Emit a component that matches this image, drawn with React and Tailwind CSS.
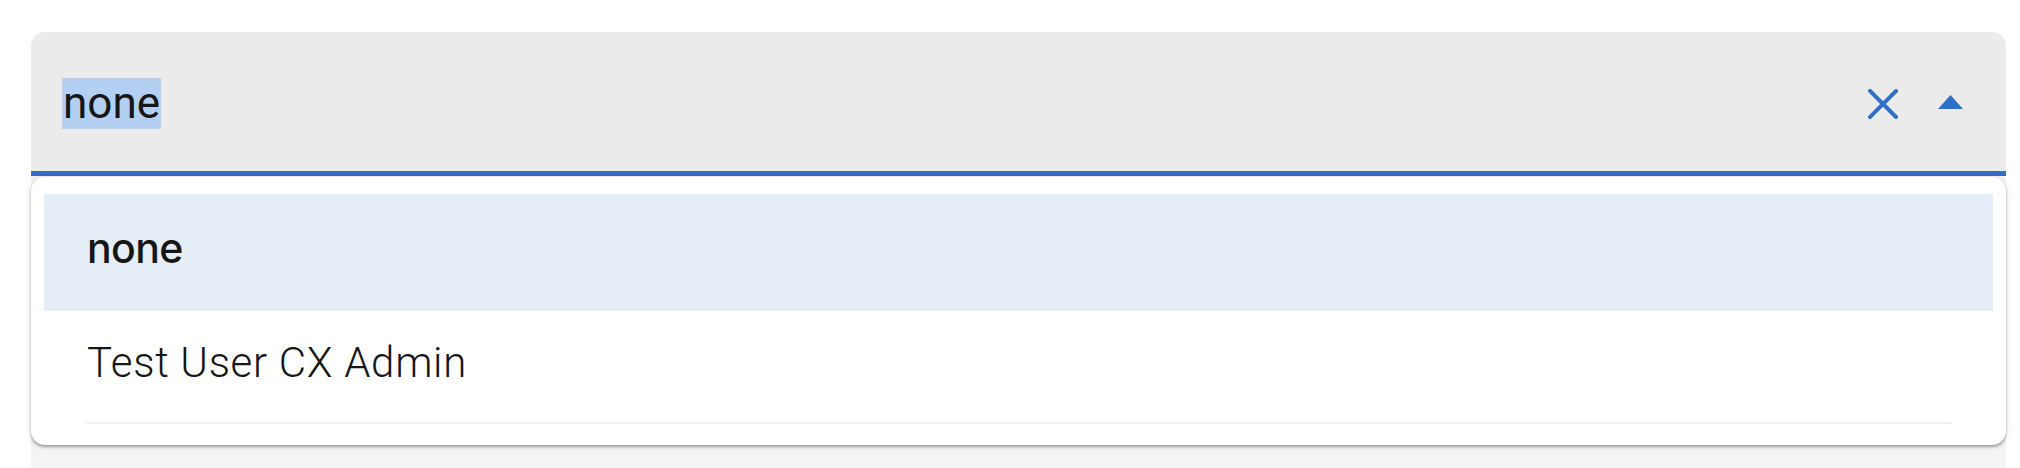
export default function App() {
  return (
    <div className="min-h-screen bg-white pt-[32px] pl-[31px] pr-[14px] font-['Roboto',sans-serif] text-[#161616]">
      <div className="relative">
        {/* select field */}
        <div className="h-[144px] rounded-t-[14px] bg-[#ebebeb] border-b-[5px] border-[#3070c6] flex items-center pl-[31px] pr-[43px] pt-[4px]">
          <span className="text-[44px] leading-[51px] bg-[#b3cff2] px-[1px]">none</span>
          <div className="ml-auto flex items-center gap-[40px]">
            <svg width="30" height="30" viewBox="0 0 30 30" className="mt-[1px]">
              <path d="M2 2 L28 28 M28 2 L2 28" stroke="#3070c6" strokeWidth="4" strokeLinecap="square" />
            </svg>
            <svg width="25" height="14" viewBox="0 0 25 14" className="-mt-[3px]">
              <polygon points="12.5,0 25,14 0,14" fill="#3070c6" />
            </svg>
          </div>
        </div>
        <div className="h-[292px] bg-[#f4f4f4]" />

        {/* dropdown menu */}
        <div className="absolute left-0 right-0 top-[145px] rounded-[14px] bg-white pt-[17px] px-[13px] pb-[21px] shadow-[0_2px_3px_rgba(0,0,0,0.35),0_0_10px_rgba(0,0,0,0.08)]">
          <div className="h-[117px] bg-[#e5edf7] pl-[43px] pb-[8px] flex items-center">
            <span className="text-[41px] font-[450] leading-none font-['Inter',sans-serif] tracking-[-0.6px]">none</span>
          </div>
          <div className="h-[111px] pl-[43px] pb-[8px] flex items-center">
            <span className="text-[42px] font-light leading-none tracking-[0.7px]">Test User CX Admin</span>
          </div>
          <div className="mx-[42px] h-[2px] bg-[#f0f0f0]" />
        </div>
      </div>
    </div>
  );
}
